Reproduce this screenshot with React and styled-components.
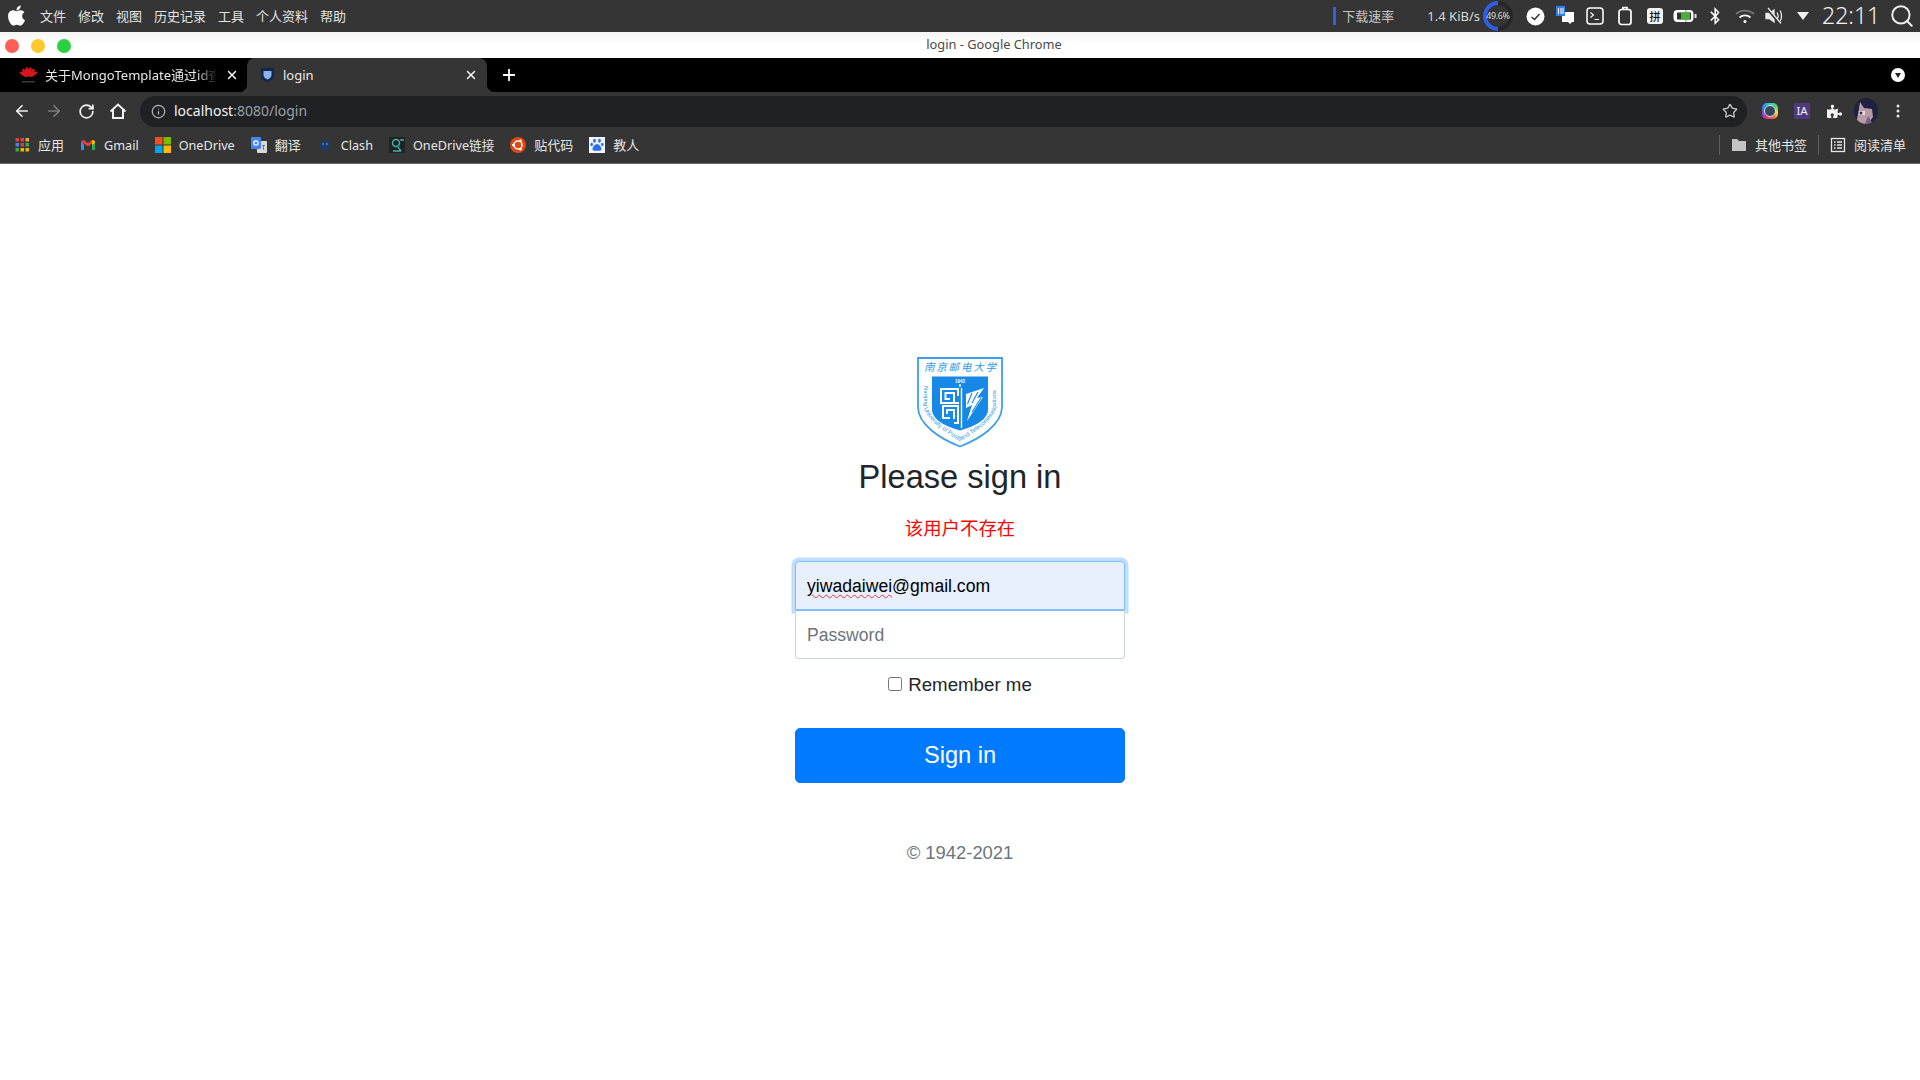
import React from 'react';
import styled, { createGlobalStyle } from 'styled-components';
import { FaApple, FaBluetoothB, FaPuzzlePiece } from 'react-icons/fa';
import { ArrowLeft, ArrowRight, RotateCw, Info, Star, Plus, X, Search } from 'lucide-react';

const GlobalStyle = createGlobalStyle`
  html, body {
    margin: 0;
    padding: 0;
    background: #fff;
  }
  * {
    box-sizing: border-box;
  }
`;

const uiFont = `"Noto Sans", "Noto Sans CJK SC", sans-serif`;
const pageFont = `"Liberation Sans", "Noto Sans CJK SC", sans-serif`;

const Screen = styled.div`
  width: 1920px;
  height: 1080px;
  overflow: hidden;
  display: flex;
  flex-direction: column;
  font-family: ${uiFont};
`;

/* top system bar */
const MenuBar = styled.div`
  height: 32px;
  background: #353535;
  display: flex;
  align-items: center;
  padding-left: 5px;
  color: #e4e4e4;
  font-size: 13px;
  line-height: 16px;
`;

const AppleMark = styled.div`
  width: 35px;
  display: flex;
  color: #fff;
  margin-top: -2px;
`;

const MenuList = styled.div`
  display: flex;
  gap: 12px;
`;

const Tray = styled.div`
  margin-left: auto;
  display: flex;
  align-items: center;
  height: 100%;
`;

const SpeedMark = styled.div`
  width: 3px;
  height: 18px;
  background: #2f5fe8;
  margin-right: 6px;
`;

const SpeedLabel = styled.span`
  color: #c4c4c4;
  width: 85px;
`;

const SpeedValue = styled.span`
  color: #d8d8d8;
  white-space: nowrap;
`;

const CpuRing = styled.div`
  width: 30px;
  height: 30px;
  margin: 0 7px 0 3px;
  border-radius: 50%;
  background: conic-gradient(#2f5fe8 0 49.6%, #262626 49.6% 100%);
  transform: scaleX(-1);
  display: flex;
  align-items: center;
  justify-content: center;
  flex: none;
`;

const CpuHole = styled.div`
  width: 22px;
  height: 22px;
  border-radius: 50%;
  background: #353535;
  transform: scaleX(-1);
  color: #dcdcdc;
  font-size: 9px;
  letter-spacing: -0.4px;
  display: flex;
  align-items: center;
  justify-content: center;
`;

const TrayCell = styled.div`
  width: ${p => p.$w || 30}px;
  height: 32px;
  display: flex;
  align-items: center;
  justify-content: center;
  color: #fff;
  flex: none;
`;

const Clock = styled.span`
  color: #f2f2f2;
  font-size: 23px;
  line-height: 28px;
  font-weight: 300;
  margin-left: 6px;
  margin-top: -2px;
  width: 67px;
  white-space: nowrap;
`;

const SearchWrap = styled.div`
  width: 31px;
  display: flex;
  color: #f0f0f0;
`;

/* window title */
const TitleBar = styled.div`
  height: 26px;
  background: linear-gradient(#f4f4f4, #fff 45%);
  display: flex;
  align-items: center;
  position: relative;
  padding: 0 0 2px 68px;
`;

const Lights = styled.div`
  position: absolute;
  left: 5px;
  top: 7px;
  display: flex;
  gap: 12px;
`;

const Light = styled.span`
  width: 14px;
  height: 14px;
  border-radius: 50%;
  background: ${p => p.$color};
`;

const WindowTitle = styled.div`
  flex: 1;
  text-align: center;
  font-size: 12.8px;
  line-height: 16px;
  color: #4a4a4a;
`;

/* tabs */
const TabStrip = styled.div`
  height: 34px;
  background: #000;
  display: flex;
  align-items: stretch;
  color: #e8e8e8;
  font-size: 13px;
  line-height: 16px;
`;

const Tab = styled.div`
  position: relative;
  width: ${p => p.$w}px;
  display: flex;
  align-items: center;
  padding-left: ${p => p.$pad}px;
  gap: 8px;
  background: ${p => (p.$active ? '#353535' : 'transparent')};
  border-radius: 8px 8px 0 0;

  ${p => p.$active && `
    &::before, &::after {
      content: '';
      position: absolute;
      bottom: 0;
      width: 8px;
      height: 8px;
    }
    &::before {
      left: -8px;
      background: radial-gradient(circle at 0 0, transparent 8px, #353535 8.5px);
    }
    &::after {
      right: -8px;
      background: radial-gradient(circle at 100% 0, transparent 8px, #353535 8.5px);
    }
  `}
`;

const TabTitle = styled.span`
  width: ${p => p.$w}px;
  white-space: nowrap;
  overflow: hidden;
  ${p => p.$fade && `
    -webkit-mask-image: linear-gradient(to right, #000 88%, transparent);
    mask-image: linear-gradient(to right, #000 88%, transparent);
  `}
`;

const TabClose = styled.span`
  display: flex;
  color: #fff;
  flex: none;
`;

const NewTab = styled.div`
  margin-left: 13px;
  display: flex;
  align-items: center;
  color: #fff;
`;

const ProfileBadge = styled.div`
  margin-left: auto;
  margin-right: 15px;
  align-self: center;
  width: 14px;
  height: 14px;
  border-radius: 50%;
  background: #fff;
  position: relative;

  &::after {
    content: '';
    position: absolute;
    left: 3.5px;
    top: 5px;
    border-left: 3.5px solid transparent;
    border-right: 3.5px solid transparent;
    border-top: 5px solid #222;
  }
`;

/* toolbar */
const Toolbar = styled.div`
  height: 35px;
  background: #353535;
  display: flex;
  align-items: flex-end;
  padding-left: 6px;
`;

const NavButton = styled.div`
  width: 32px;
  height: 31px;
  padding-bottom: 1px;
  display: flex;
  align-items: center;
  justify-content: center;
  color: ${p => (p.$dim ? '#7d7d7d' : '#f1f1f1')};
  flex: none;
`;

const Omnibox = styled.div`
  width: 1607px;
  height: 31px;
  margin-left: 6px;
  border-radius: 16px;
  background: #202124;
  display: flex;
  align-items: center;
  padding: 0 9px 1px 11px;
  font-size: 14px;
  line-height: 18px;
  color: #9aa0a6;
`;

const InfoWrap = styled.span`
  display: flex;
  width: 23px;
  color: #b5b5b5;
`;

const Host = styled.span`
  color: #f1f3f4;
`;

const StarWrap = styled.span`
  margin-left: auto;
  display: flex;
  color: #c4c7c5;
`;

const ExtensionRow = styled.div`
  display: flex;
  margin-left: 7px;
`;

/* bookmarks */
const BookmarkBar = styled.div`
  height: 37px;
  background: #353535;
  border-bottom: 1px solid #6a6a6a;
  display: flex;
  align-items: center;
  padding: 0 14px;
  gap: 16px;
  font-size: 13px;
  line-height: 16px;
  color: #e6e6e6;
`;

const Bookmark = styled.div`
  display: flex;
  align-items: center;
  gap: 8px;
  white-space: nowrap;
  font-size: ${p => (p.$latin ? '12.65px' : '13px')};
`;

const BarSpacer = styled.div`
  flex: 1;
`;

const BarDivider = styled.div`
  width: 1px;
  height: 20px;
  background: #606060;
  margin: 0 -5px 0 -5px;
`;

/* login page */
const Main = styled.main`
  flex: 1;
  background: #fff;
  display: flex;
  flex-direction: column;
  align-items: center;
  padding-top: 193px;
  font-family: ${pageFont};
  color: #212529;
`;

const Crest = styled.svg`
  display: block;
  width: 86px;
  height: 91px;
`;

const Heading = styled.h1`
  margin: 10px 0 0;
  font-size: 32.6px;
  font-weight: 400;
  line-height: 37px;
`;

const ErrorText = styled.div`
  margin-top: 21px;
  color: #f00;
  font-size: 18.4px;
  line-height: 26px;
`;

const Fields = styled.div`
  width: 330px;
  margin-top: 19px;
  display: flex;
  flex-direction: column;
`;

const EmailField = styled.div`
  height: 49px;
  padding: 1px 11px 0;
  display: flex;
  align-items: center;
  background: #e8f0fe;
  border: 1px solid #80bdff;
  border-radius: 4px 4px 0 0;
  box-shadow: 0 0 0 3.5px #bfdeff;
  font-size: 17.6px;
  color: #000;
  white-space: pre;
`;

const Misspelled = styled.span`
  text-decoration: underline wavy #e33;
  text-decoration-thickness: 1px;
  text-underline-offset: 2px;
`;

const PasswordInput = styled.input`
  position: relative;
  display: block;
  width: 100%;
  height: 49px;
  padding: 1px 11px 0;
  border: 1px solid #ced4da;
  border-top-color: #80bdff;
  border-radius: 0 0 4px 4px;
  background: #fff;
  font-family: ${pageFont};
  font-size: 17.6px;
  outline: none;

  &::placeholder {
    color: #6c757d;
    opacity: 1;
  }
`;

const RememberRow = styled.label`
  margin-top: 13px;
  display: flex;
  align-items: center;
  gap: 6px;
  font-size: 18.7px;
  line-height: 26px;
`;

const RememberBox = styled.input`
  width: 14px;
  height: 14px;
  margin: 0 0 3px;
`;

const SignInButton = styled.button`
  width: 330px;
  height: 55px;
  margin-top: 30px;
  border: 1px solid #007bff;
  border-radius: 5px;
  background: #007bff;
  color: #fff;
  font-family: ${pageFont};
  font-size: 23.6px;
`;

const Copyright = styled.p`
  margin: 57px 0 0;
  color: #6c757d;
  font-size: 18.4px;
  line-height: 26px;
`;

/* small colour icons */
const RingIcon = styled.div`
  width: 16px;
  height: 16px;
  border-radius: 5px;
  background: conic-gradient(#2bd0e0, #46d66a, #f6d84a, #f0663f, #e52f92, #7a4fe0, #2b8be8, #2bd0e0);
  display: flex;
  align-items: center;
  justify-content: center;

  &::after {
    content: '';
    width: 10px;
    height: 10px;
    border-radius: 50%;
    background: #33495a;
    border: 1.5px solid #ddd;
  }
`;

const IaIcon = styled.div`
  width: 16px;
  height: 16px;
  background: #4f3a80;
  color: #f2f2f2;
  font-size: 11.5px;
  line-height: 16px;
  text-align: center;
`;

const TinyPin = styled.span`
  font-size: 11px;
  font-weight: 500;
  color: #111;
  background: #f4f4f4;
  width: 16px;
  height: 16px;
  border-radius: 3px;
  display: flex;
  align-items: center;
  justify-content: center;
  line-height: 1;
`;

const HuaweiIcon = () => (
  <svg width="17" height="17" viewBox="0 0 17 17">
    {[-60, -36, -12, 12, 36, 60].map(a => (
      <ellipse key={a} cx="8.5" cy="4.5" rx="1.7" ry="4.4" fill="#d8141c" transform={`rotate(${a} 8.5 10)`} />
    ))}
    <rect x="2" y="14" width="13" height="1.5" fill="#3a3a3a" />
  </svg>
);

const ShieldFavicon = () => (
  <svg width="15" height="16" viewBox="0 0 15 16">
    <path d="M1 1h13v7c0 4-3.500 6-6.500 7C4.500 14 1 12 1 8z" fill="#13264f" />
    <path d="M3.500 4h8v4c0 2-2 3.500-4 4.500-2-1-4-2.500-4-4.500z" fill="#8fb4ea" />
  </svg>
);

const HomeIcon = () => (
  <svg width="18" height="18" viewBox="0 0 18 18" fill="none" stroke="currentColor" strokeWidth="2">
    <path d="M1.500 9.500 9 2.500l7.500 7" />
    <path d="M4 8v8h10V8" />
  </svg>
);

const AppsIcon = () => (
  <svg width="16" height="16" viewBox="0 0 16 16">
    {[
      '#d9443a', '#d9443a', '#e8a33a',
      '#4285f4', '#d9443a', '#34a853',
      '#34a853', '#f4b400', '#f4b400',
    ].map((c, i) => (
      <rect key={i} x={1.500 + (i % 3) * 5} y={1 + Math.floor(i / 3) * 5} width="3.500" height="3.500" fill={c} />
    ))}
  </svg>
);

const GmailIcon = () => (
  <svg width="16" height="16" viewBox="0 0 16 16">
    <path d="M1 4v9h3V7z" fill="#4285f4" />
    <path d="M12 7v6h3V4z" fill="#34a853" />
    <path d="M1 4l7 5.500L15 4l-3-1-4 3.200L4 3z" fill="#ea4335" />
    <path d="M12 3l3 1v2l-3 2z" fill="#fbbc04" />
  </svg>
);

const MicrosoftIcon = () => (
  <svg width="16" height="16" viewBox="0 0 16 16">
    <rect width="7.500" height="7.500" fill="#f25022" />
    <rect x="8.500" width="7.500" height="7.500" fill="#7fba00" />
    <rect y="8.500" width="7.500" height="7.500" fill="#00a4ef" />
    <rect x="8.500" y="8.500" width="7.500" height="7.500" fill="#ffb900" />
  </svg>
);

const TranslateIcon = () => (
  <svg width="16" height="16" viewBox="0 0 16 16">
    <rect x="6" y="4" width="10" height="12" rx="1" fill="#d8d8d8" />
    <rect width="10" height="12" rx="1" fill="#4285f4" />
    <circle cx="5" cy="6" r="2.200" fill="none" stroke="#fff" strokeWidth="1.200" />
    <path d="M11 8.500h3M12.500 8v5" stroke="#777" strokeWidth="1" />
  </svg>
);

const ClashIcon = () => (
  <svg width="16" height="16" viewBox="0 0 16 16">
    <path d="M4 5 3.500 1.500 6.500 4h3l3-2.500L12 5c1 2 1 4 .5 7-1 1.500-8 1.500-9 0-.5-3-.5-5 .5-7z" fill="#1d3b6b" />
    <circle cx="6" cy="7" r=".8" fill="#6fb2e8" />
    <circle cx="10" cy="7" r=".8" fill="#6fb2e8" />
  </svg>
);

const OneDriveLinkIcon = () => (
  <svg width="16" height="16" viewBox="0 0 16 16" fill="none">
    <rect width="16" height="16" fill="#222" />
    <circle cx="7" cy="6" r="3.500" stroke="#3fb5a8" strokeWidth="1.500" />
    <path d="M4 14h8M9 10l3 4M11 3h4" stroke="#3fb5a8" strokeWidth="1.300" />
  </svg>
);

const UbuntuIcon = () => (
  <svg width="16" height="16" viewBox="0 0 16 16">
    <circle cx="8" cy="8" r="8" fill="#dd4814" />
    <circle cx="8" cy="8" r="4" fill="none" stroke="#fff" strokeWidth="1.500" />
    <circle cx="3.300" cy="8" r="1.300" fill="#fff" />
    <circle cx="10.500" cy="3.800" r="1.300" fill="#fff" />
    <circle cx="10.500" cy="12.200" r="1.300" fill="#fff" />
  </svg>
);

const PawIcon = () => (
  <svg width="16" height="16" viewBox="0 0 16 16" fill="#2f6fe4">
    <rect width="16" height="16" fill="#f0f4ff" />
    <ellipse cx="5.500" cy="3.800" rx="1.400" ry="2" />
    <ellipse cx="10.500" cy="3.800" rx="1.400" ry="2" />
    <ellipse cx="2.700" cy="7.500" rx="1.300" ry="1.800" />
    <ellipse cx="13.300" cy="7.500" rx="1.300" ry="1.800" />
    <path d="M8 7c2 0 4.500 3 4.500 5 0 2-2.500 1.800-4.500 1.800S3.500 14 3.500 12c0-2 2.500-5 4.500-5z" />
  </svg>
);

const FolderIcon = () => (
  <svg width="16" height="14" viewBox="0 0 16 14" fill="#c4c4c4">
    <path d="M1 1h5l2 2h7v10H1z" />
  </svg>
);

const ReadingIcon = () => (
  <svg width="16" height="16" viewBox="0 0 16 16" fill="none" stroke="#e6e6e6" strokeWidth="1.300">
    <rect x="1.500" y="1.500" width="13" height="13" />
    <path d="M4 5h1.500M4 8h1.500M4 11h1.500M7 5h5M7 8h5M7 11h5" />
  </svg>
);

const CheckTray = () => (
  <svg width="19" height="19" viewBox="0 0 19 19">
    <circle cx="9.500" cy="9.500" r="9" fill="#fff" />
    <path d="M5.500 10l3 2.500 5-5.500" fill="none" stroke="#333" strokeWidth="1.500" />
  </svg>
);

const WindowsTray = () => (
  <svg width="18" height="20" viewBox="0 0 18 20">
    <rect x="6" y="6" width="12" height="10" fill="#fff" />
    <path d="M12 16h4l-2 2z" fill="#fff" />
    <rect x="0" y="0" width="9" height="10" fill="#2f7fe8" />
    <path d="M2.500 8V2M5 8V2M7 8V2" stroke="#fff" strokeWidth="1" />
  </svg>
);

const TerminalTray = () => (
  <svg width="18" height="18" viewBox="0 0 18 18" fill="none" stroke="#fff" strokeWidth="1.500">
    <rect x="1" y="1" width="16" height="16" rx="3" />
    <path d="M4.500 5.500 7.500 8l-3 2.500M8.500 12.500h4.500" strokeWidth="1.100" />
  </svg>
);

const ClipboardTray = () => (
  <svg width="16" height="20" viewBox="0 0 16 20" fill="none" stroke="#fff" strokeWidth="1.700">
    <rect x="2" y="3.500" width="12" height="15" rx="2.500" />
    <path d="M6 4V1.500h4V4" />
  </svg>
);

const BatteryTray = () => (
  <svg width="24" height="14" viewBox="0 0 24 14">
    <rect x="1" y="1.500" width="19" height="11" rx="3" fill="#fff" stroke="#fff" />
    <rect x="4" y="3.500" width="14" height="7" fill="#333" />
    <rect x="8" y="3.500" width="9" height="7" fill="#4cae3f" />
    <path d="M13 1v12" stroke="#4cae3f" strokeWidth="1" />
    <rect x="21.500" y="5" width="2" height="4" fill="#ddd" />
  </svg>
);

const WifiTray = () => (
  <svg width="20" height="15" viewBox="0 0 20 15" fill="none" strokeWidth="1.800">
    <path d="M1 5c5-4.500 13-4.500 18 0" stroke="#777" />
    <path d="M4.500 8.500c3-2.800 8-2.800 11 0" stroke="#f4f4f4" />
    <circle cx="10" cy="12.500" r="1.500" fill="#fff" stroke="none" />
  </svg>
);

const MuteTray = () => (
  <svg width="20" height="18" viewBox="0 0 20 18" fill="none" stroke="#e8e8e8" strokeWidth="1.300">
    <path d="M1 6.500h3.500L9 3v12L4.500 11.500H1z" fill="#e8e8e8" />
    <path d="M12 5.500c1.200 2 1.200 5 0 7M15 3.500c2 3 2 8 0 11" />
    <path d="M2 1.500 15 17" stroke="#353535" strokeWidth="2.500" />
    <path d="M3 1 16 16.500" />
  </svg>
);

const DropTray = () => (
  <svg width="12" height="8" viewBox="0 0 12 8">
    <path d="M0 0h12L6 8z" fill="#f0f0f0" />
  </svg>
);

const AvatarIcon = () => (
  <svg width="24" height="26" viewBox="0 0 24 26">
    <defs>
      <clipPath id="avatarClip">
        <ellipse cx="12" cy="13" rx="12" ry="13" />
      </clipPath>
    </defs>
    <g clipPath="url(#avatarClip)">
      <rect width="24" height="26" fill="#1e2140" />
      <path d="M6 4 10 10l8 1 1 8-5 7H2l2-10z" fill="#b79aa8" />
      <path d="M5 13h6v4H5z" fill="#e6ddd8" />
      <path d="M14 18l5 8H11z" fill="#7b5f83" />
      <circle cx="7" cy="15" r="1.500" fill="#2b2f55" />
    </g>
  </svg>
);

const menuItems = ['文件', '修改', '视图', '历史记录', '工具', '个人资料', '帮助'];

const crestBlue = '#2e97ea';

const CrestLogo = () => (
  <Crest viewBox="0 0 86 91">
    <defs>
      <path id="crestRing" d="M6.500 26V48C7 62 30 77 43 84C56 77 79 62 79.500 48V26" />
    </defs>
    <path d="M1 1H85V50C85 68 62 82 43 89.500C24 82 1 68 1 50Z" fill="#fff" stroke="#3d9fea" strokeWidth="1.800" />
    <text x="43" y="14" textAnchor="middle" fontSize="10.500" fontStyle="italic" fill={crestBlue} textLength="72" fontFamily={'"Noto Sans CJK SC", sans-serif'}>
      南京邮电大学
    </text>
    <path d="M15 19.500H71V52C71 64 55 70 43 73.500C31 70 15 64 15 52Z" fill="#1688e6" />
    <text x="43" y="26" textAnchor="middle" fontSize="4.600" fontWeight="700" fill="#fff" fontFamily={'"Liberation Sans", sans-serif'}>
      1942
    </text>
    <path d="M43 27V30M44.500 31V71" stroke="#fff" strokeWidth="1.400" />
    <g fill="none" stroke="#fff" strokeWidth="2">
      <path d="M42 32H24V46H42" />
      <path d="M41 32V39" />
      <path d="M37 46V36H28.500V42H33" />
      <path d="M42 49H26V61H33" />
      <path d="M41 49V66H37" />
      <path d="M37 62V53H30V57" />
    </g>
    <path d="M49 37 67 31 60 41 66 40 50 64 55 48 49 51Z" fill="#fff" />
    <path d="M55 36 50.500 47M61 35 55 46M64 41 55 55" fill="none" stroke="#1688e6" strokeWidth="1.100" />
    <text fontSize="6.200" fill={crestBlue} fontFamily={'"Liberation Sans", sans-serif'}>
      <textPath href="#crestRing" startOffset="3" textLength="140" lengthAdjust="spacingAndGlyphs">
        Nanjing University of Posts and Telecommunications
      </textPath>
    </text>
  </Crest>
);

function App() {
  return (
    <Screen>
      <GlobalStyle />
      <MenuBar>
        <AppleMark><FaApple size={23} /></AppleMark>
        <MenuList>
          {menuItems.map(m => <span key={m}>{m}</span>)}
        </MenuList>
        <Tray>
          <SpeedMark />
          <SpeedLabel>下载速率</SpeedLabel>
          <SpeedValue>1.4 KiB/s</SpeedValue>
          <CpuRing><CpuHole>49.6%</CpuHole></CpuRing>
          <TrayCell><CheckTray /></TrayCell>
          <TrayCell><WindowsTray /></TrayCell>
          <TrayCell><TerminalTray /></TrayCell>
          <TrayCell><ClipboardTray /></TrayCell>
          <TrayCell><TinyPin>拼</TinyPin></TrayCell>
          <TrayCell><BatteryTray /></TrayCell>
          <TrayCell><FaBluetoothB size={18} /></TrayCell>
          <TrayCell><WifiTray /></TrayCell>
          <TrayCell><MuteTray /></TrayCell>
          <TrayCell $w={26}><DropTray /></TrayCell>
          <Clock>22:11</Clock>
          <SearchWrap><Search size={26} strokeWidth={1.8} /></SearchWrap>
        </Tray>
      </MenuBar>

      <TitleBar>
        <Lights>
          <Light $color="#ff5f56" />
          <Light $color="#ffc82c" />
          <Light $color="#2ad03f" />
        </Lights>
        <WindowTitle>login - Google Chrome</WindowTitle>
      </TitleBar>

      <TabStrip>
        <Tab $w={247} $pad={20}>
          <HuaweiIcon />
          <TabTitle $w={172} $fade>关于MongoTemplate通过id查</TabTitle>
          <TabClose><X size={14} strokeWidth={2.4} /></TabClose>
        </Tab>
        <Tab $w={240} $pad={13} $active>
          <ShieldFavicon />
          <TabTitle $w={173}>login</TabTitle>
          <TabClose><X size={14} strokeWidth={2.4} /></TabClose>
        </Tab>
        <NewTab><Plus size={18} strokeWidth={2.4} /></NewTab>
        <ProfileBadge />
      </TabStrip>

      <Toolbar>
        <NavButton><ArrowLeft size={18} strokeWidth={2.2} /></NavButton>
        <NavButton $dim><ArrowRight size={18} strokeWidth={2.2} /></NavButton>
        <NavButton><RotateCw size={17} strokeWidth={2.4} /></NavButton>
        <NavButton><HomeIcon /></NavButton>
        <Omnibox>
          <InfoWrap><Info size={15} /></InfoWrap>
          <Host>localhost</Host>:8080/login
          <StarWrap><Star size={16} /></StarWrap>
        </Omnibox>
        <ExtensionRow>
          <NavButton><RingIcon /></NavButton>
          <NavButton><IaIcon>IA</IaIcon></NavButton>
          <NavButton><FaPuzzlePiece size={15} /></NavButton>
          <NavButton><AvatarIcon /></NavButton>
          <NavButton>
            <svg width="4" height="14" viewBox="0 0 4 14" fill="#e8e8e8">
              <circle cx="2" cy="2" r="1.500" />
              <circle cx="2" cy="7" r="1.500" />
              <circle cx="2" cy="12" r="1.500" />
            </svg>
          </NavButton>
        </ExtensionRow>
      </Toolbar>

      <BookmarkBar>
        <Bookmark><AppsIcon />应用</Bookmark>
        <Bookmark $latin><GmailIcon />Gmail</Bookmark>
        <Bookmark $latin><MicrosoftIcon />OneDrive</Bookmark>
        <Bookmark><TranslateIcon />翻译</Bookmark>
        <Bookmark $latin><ClashIcon />Clash</Bookmark>
        <Bookmark $latin><OneDriveLinkIcon />OneDrive链接</Bookmark>
        <Bookmark><UbuntuIcon />贴代码</Bookmark>
        <Bookmark><PawIcon />教人</Bookmark>
        <BarSpacer />
        <BarDivider />
        <Bookmark><FolderIcon />其他书签</Bookmark>
        <BarDivider />
        <Bookmark><ReadingIcon />阅读清单</Bookmark>
      </BookmarkBar>

      <Main>
        <CrestLogo />
        <Heading>Please sign in</Heading>
        <ErrorText>该用户不存在</ErrorText>
        <Fields>
          <EmailField><Misspelled>yiwadaiwei</Misspelled>@gmail.com</EmailField>
          <PasswordInput type="password" placeholder="Password" />
        </Fields>
        <RememberRow>
          <RememberBox type="checkbox" />
          Remember me
        </RememberRow>
        <SignInButton>Sign in</SignInButton>
        <Copyright>© 1942-2021</Copyright>
      </Main>
    </Screen>
  );
}

export default App;
